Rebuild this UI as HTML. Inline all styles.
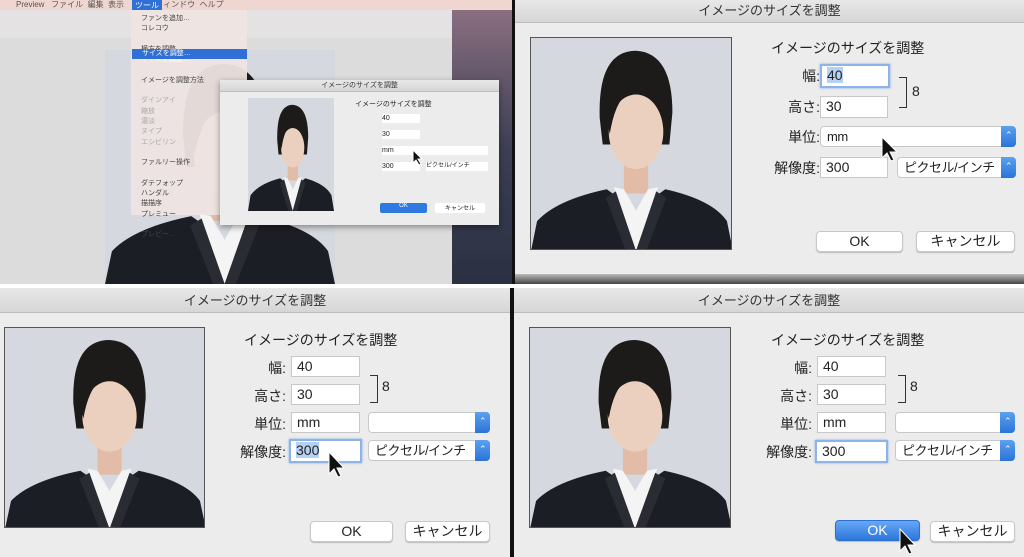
<!DOCTYPE html>
<html><head><meta charset="utf-8"><style>
*{margin:0;padding:0;box-sizing:border-box}
body{width:1024px;height:557px;overflow:hidden;background:#111;position:relative;font-family:"Liberation Sans","Noto Sans CJK JP",sans-serif;color:#222}
.a{position:absolute}
.dlg{background:#ececec}
.tb{background:linear-gradient(#e8e8e8,#d6d6d6);border-bottom:1px solid #bdbdbd;text-align:center;font-size:13px;color:#333}
.f{position:absolute;background:#fff;border:1px solid #c8c8c8;font-size:14px;padding-left:5px;line-height:19px}
.foc{border:2px solid #8db4e8;box-shadow:0 0 2px #7aa7e3}
.lb{position:absolute;font-size:14px;text-align:right;width:70px}
.pp{position:absolute;background:#fff;border:1px solid #c8c8c8;border-radius:4px;font-size:13px;letter-spacing:-0.5px;padding-left:6px;line-height:19px;white-space:nowrap}
.pp i{position:absolute;right:-1px;top:-1px;bottom:-1px;width:15px;background:linear-gradient(#5da0f0,#2a74d8);border-radius:0 4px 4px 0}
.pp i:before{content:"⌃";position:absolute;color:#fff;font-size:9px;left:4px;top:0;font-style:normal}
.bt{position:absolute;background:#fff;border:1px solid #c8c8c8;border-radius:4px;font-size:14px;text-align:center;line-height:19px;box-shadow:0 1px 1px #bbb}
.blue{background:linear-gradient(#66a8f5,#2c76dc);color:#fff;border-color:#2c6fcc}
.ph{position:absolute;border:1px solid #555;overflow:hidden}
.br{position:absolute;border:1.5px solid #333;border-left:none;width:8px}
</style></head><body>
<svg width="0" height="0" style="position:absolute"><defs><symbol id="p" viewBox="0 0 200 200" preserveAspectRatio="none">
<rect width="200" height="200" fill="#d5d9df"/>
<path d="M68 75 Q66 12 104 12 Q140 14 140 70 L137 100 L71 100Z" fill="#1d1a1a"/>
<rect x="92" y="112" width="24" height="34" fill="#e2bca6"/>
<ellipse cx="104" cy="88" rx="27" ry="35" fill="#ecd0bf"/>
<path d="M76 82 Q74 30 104 28 Q130 30 134 75 Q120 45 100 50 Q84 55 78 90Z" fill="#1d1a1a"/>
<path d="M0 200 L6 172 Q25 152 75 142 L104 162 L133 142 Q180 152 194 172 L200 200Z" fill="#1c1e25"/>
<path d="M82 140 L104 200 L126 140 L116 142 L104 162 L92 142Z" fill="#f4f4f4"/>
<path d="M84 144 L104 200 L94 200 L74 150Z" fill="#2a2c33"/>
<path d="M124 144 L104 200 L114 200 L134 150Z" fill="#2a2c33"/>
</symbol></defs></svg>

<!-- top-left quadrant -->
<div class="a" style="left:0;top:0;width:512px;height:284px;background:#d8d8d8;overflow:hidden">
 <div class="a" style="left:0;top:0;width:512px;height:10px;background:#f0d6d0;font-size:8px;line-height:9px;color:#555;padding-left:16px">Preview&nbsp;&nbsp; ファイル&nbsp; 編集&nbsp; 表示&nbsp;&nbsp;&nbsp;&nbsp;&nbsp;&nbsp;&nbsp;&nbsp;&nbsp;&nbsp;&nbsp;&nbsp;&nbsp; ウィンドウ&nbsp; ヘルプ</div>
 <div class="a" style="left:132px;top:0;width:30px;height:10px;background:#2f6fd6;color:#fff;font-size:8px;text-align:center">ツール</div>
 <div class="a" style="left:0;top:10px;width:452px;height:28px;background:#e4e2e2"></div>
 <div class="a" style="left:452px;top:10px;width:60px;height:274px;background:linear-gradient(#8a6f80,#3d3f55 50%,#2a3042)"></div>
 <div class="a" style="left:0;top:38px;width:452px;height:246px;background:#dcdcdc"></div>
 <svg class="a" style="left:105px;top:50px" width="230" height="234"><use href="#p" width="230" height="234"/></svg>
 <div class="a" style="left:131px;top:10px;width:116px;height:205px;background:rgba(238,228,226,.95);font-size:7px;color:#444;line-height:10.3px;padding:4px 10px">ファンを追加…<br>コレコウ<br><br>横方を調整…<br><span style="color:#fff">サイズを調整…</span><br><br>イメージを調整方法<br><br><span style="color:#aaa">ダインアイ<br>縮放<br>濃淡<br>ヌイプ<br>エシビリン</span><br><br>ファルリー操作<br><br>ダテフォップ<br>ハンダル<br>描描序<br>プレミュー<br><br>プレビー…</div>
 <div class="a" style="left:132px;top:49px;width:115px;height:10px;background:#2f6fd6;color:#fff;font-size:7px;padding-left:10px;line-height:10px">サイズを調整…</div>
 <div class="a dlg" style="left:220px;top:80px;width:279px;height:145px;box-shadow:0 2px 6px rgba(0,0,0,.4)">
  <div class="tb" style="height:12px;font-size:7px;line-height:12px">イメージのサイズを調整</div>
  <svg class="a" style="left:28px;top:18px" width="86" height="113"><use href="#p" width="86" height="113"/></svg>
  <div class="a" style="left:135px;top:19px;font-size:7px">イメージのサイズを調整</div>
  <div class="a" style="left:162px;top:34px;width:38px;height:9px;background:#fff;font-size:7px;line-height:9px">40</div>
  <div class="a" style="left:162px;top:50px;width:38px;height:9px;background:#fff;font-size:7px;line-height:9px">30</div>
  <div class="a" style="left:162px;top:66px;width:106px;height:9px;background:#fff;font-size:7px;line-height:9px">mm</div>
  <div class="a" style="left:162px;top:82px;width:38px;height:9px;background:#fff;font-size:7px;line-height:9px">300</div>
  <div class="a" style="left:206px;top:82px;width:62px;height:9px;background:#fff;font-size:6px;line-height:9px">ピクセル/インチ</div>
  <div class="a" style="left:160px;top:123px;width:47px;height:10px;background:#2f7ae0;border-radius:2px;color:#fff;font-size:6px;text-align:center">OK</div>
  <div class="a" style="left:215px;top:123px;width:50px;height:10px;background:#fff;border-radius:2px;font-size:6px;text-align:center">キャンセル</div>
 </div>
</div>
<div class="a" style="left:0;top:284px;width:512px;height:4px;background:#fff"></div>

<!-- top-right -->
<div class="a dlg" style="left:515px;top:0;width:509px;height:274px">
 <div class="tb" style="height:23px;line-height:22px;font-size:13px;margin-left:0">イメージのサイズを調整</div>
 <svg class="a ph" style="left:15px;top:37px" width="202" height="213"><use href="#p" width="202" height="213"/></svg>
 <div class="a" style="left:256px;top:38px;font-size:14px">イメージのサイズを調整</div>
 <div class="lb" style="left:235px;top:66px">幅:</div>
 <div class="f foc" style="left:305px;top:64px;width:70px;height:24px"><span style="background:#b5d2f5">40</span></div>
 <div class="lb" style="left:235px;top:97px">高さ:</div>
 <div class="f" style="left:305px;top:96px;width:68px;height:22px">30</div>
 <div class="br" style="left:384px;top:77px;height:31px"></div>
 <div class="a" style="left:397px;top:83px;font-size:14px">8</div>
 <div class="lb" style="left:235px;top:127px">単位:</div>
 <div class="pp" style="left:305px;top:126px;width:196px;height:21px">mm<i></i></div>
 <div class="lb" style="left:235px;top:158px">解像度:</div>
 <div class="f" style="left:305px;top:157px;width:68px;height:21px">300</div>
 <div class="pp" style="left:382px;top:157px;width:119px;height:21px">ピクセル/インチ<i></i></div>
 <div class="bt" style="left:301px;top:231px;width:87px;height:21px">OK</div>
 <div class="bt" style="left:401px;top:231px;width:99px;height:21px">キャンセル</div>
</div>
<div class="a" style="left:515px;top:274px;width:509px;height:10px;background:linear-gradient(#bbb,#444)"></div>
<div class="a" style="left:512px;top:284px;width:512px;height:4px;background:#fff"></div>

<!-- bottom-left -->
<div class="a dlg" style="left:0;top:288px;width:510px;height:269px">
 <div class="tb" style="height:25px;line-height:26px">イメージのサイズを調整</div>
 <svg class="a ph" style="left:4px;top:39px" width="201" height="201"><use href="#p" width="201" height="201"/></svg>
 <div class="a" style="left:244px;top:42px;font-size:14px">イメージのサイズを調整</div>
 <div class="lb" style="left:216px;top:70px">幅:</div>
 <div class="f" style="left:291px;top:68px;width:69px;height:21px">40</div>
 <div class="lb" style="left:216px;top:98px">高さ:</div>
 <div class="f" style="left:291px;top:96px;width:69px;height:21px">30</div>
 <div class="br" style="left:370px;top:87px;height:28px"></div>
 <div class="a" style="left:382px;top:90px;font-size:14px">8</div>
 <div class="lb" style="left:216px;top:126px">単位:</div>
 <div class="f" style="left:291px;top:124px;width:69px;height:21px">mm</div>
 <div class="pp" style="left:368px;top:124px;width:122px;height:21px"><i></i></div>
 <div class="lb" style="left:216px;top:154px">解像度:</div>
 <div class="f foc" style="left:289px;top:151px;width:73px;height:24px"><span style="background:#b5d2f5">300</span></div>
 <div class="pp" style="left:368px;top:152px;width:122px;height:21px">ピクセル/インチ<i></i></div>
 <div class="bt" style="left:310px;top:233px;width:83px;height:21px">OK</div>
 <div class="bt" style="left:405px;top:233px;width:85px;height:21px">キャンセル</div>
</div>

<!-- bottom-right -->
<div class="a dlg" style="left:514px;top:288px;width:510px;height:269px">
 <div class="tb" style="height:25px;line-height:26px">イメージのサイズを調整</div>
 <svg class="a ph" style="left:15px;top:39px" width="202" height="201"><use href="#p" width="202" height="201"/></svg>
 <div class="a" style="left:257px;top:42px;font-size:14px">イメージのサイズを調整</div>
 <div class="lb" style="left:228px;top:70px">幅:</div>
 <div class="f" style="left:303px;top:68px;width:69px;height:21px">40</div>
 <div class="lb" style="left:228px;top:98px">高さ:</div>
 <div class="f" style="left:303px;top:96px;width:69px;height:21px">30</div>
 <div class="br" style="left:384px;top:87px;height:28px"></div>
 <div class="a" style="left:396px;top:90px;font-size:14px">8</div>
 <div class="lb" style="left:228px;top:126px">単位:</div>
 <div class="f" style="left:303px;top:124px;width:69px;height:21px">mm</div>
 <div class="pp" style="left:381px;top:124px;width:120px;height:21px"><i></i></div>
 <div class="lb" style="left:228px;top:154px">解像度:</div>
 <div class="f foc" style="left:301px;top:152px;width:73px;height:23px">300</div>
 <div class="pp" style="left:381px;top:152px;width:120px;height:21px">ピクセル/インチ<i></i></div>
 <div class="bt blue" style="left:321px;top:232px;width:85px;height:21px">OK</div>
 <div class="bt" style="left:416px;top:233px;width:85px;height:21px">キャンセル</div>
</div>

<!-- cursors -->
<svg class="a" style="left:0;top:0" width="1024" height="557">
 <g fill="#111" stroke="#fff" stroke-width="1">
  <path d="M882 137 L882 158 L887 153 L891 161 L894 160 L890 152 L897 152Z"/>
  <path d="M329 452 L329 474 L334 469 L338 477 L341 476 L337 468 L344 468Z"/>
  <path d="M900 529 L900 551 L905 546 L909 554 L912 553 L908 545 L915 545Z"/>
  <path d="M413 150 L413 163 L416 160 L419 165 L421 164 L418 159 L422 159Z"/>
 </g>
</svg>
</body></html>
